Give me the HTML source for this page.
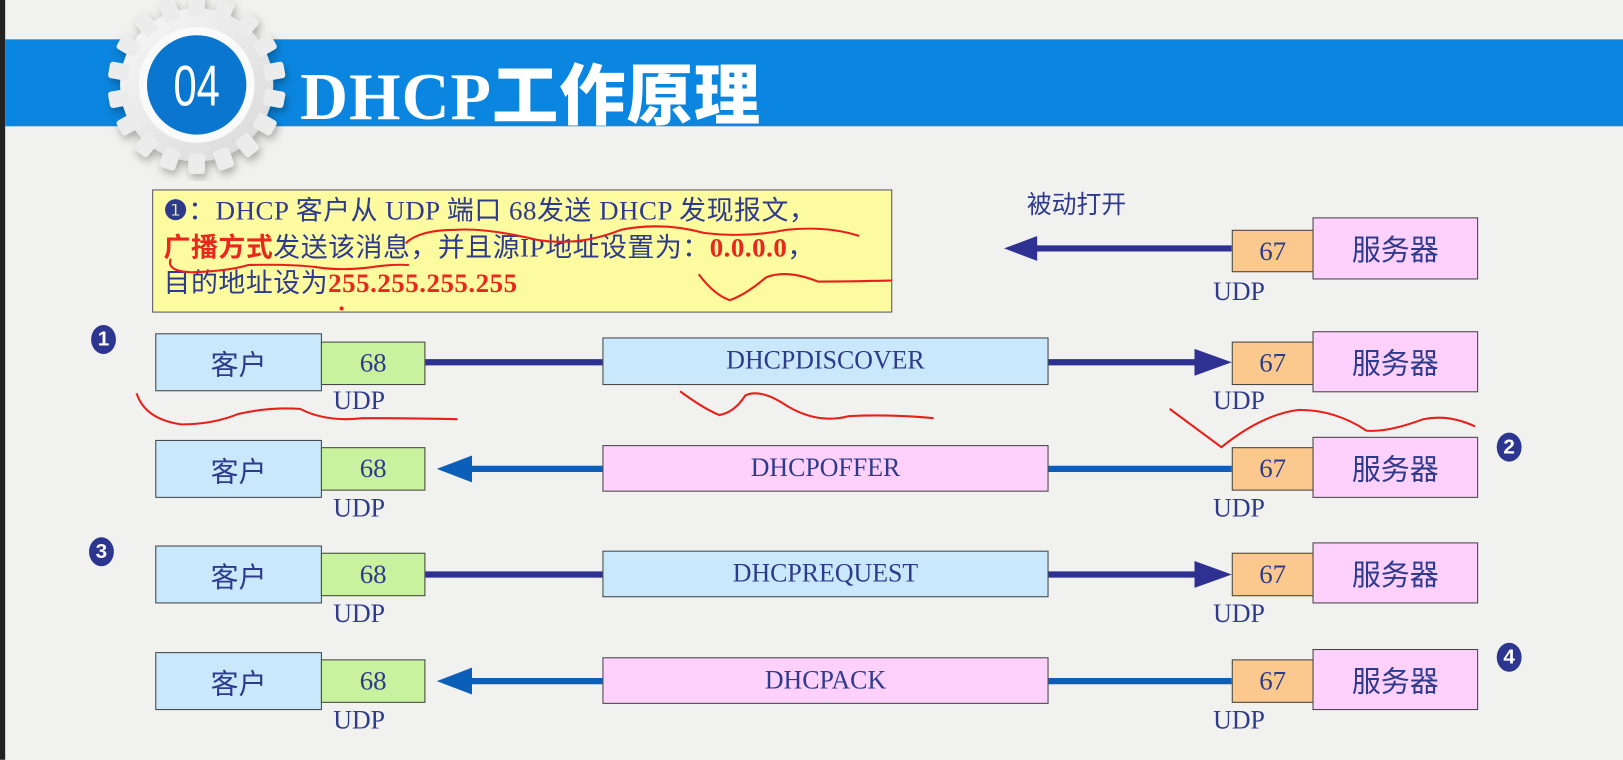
<!DOCTYPE html>
<html><head><meta charset="utf-8"><style>
html,body{margin:0;padding:0;width:1623px;height:760px;overflow:hidden;background:#f1f1ef;}
#w{position:absolute;left:0;top:0;width:1568px;height:734px;transform:scale(1.0351);transform-origin:0 0;font-family:"Liberation Serif","Noto Serif CJK SC",serif;color:#2e3a8c;}
.b{position:absolute;box-sizing:border-box;border:1.5px solid #444;display:flex;align-items:center;justify-content:center;}
.cl{background:#c9e8fb;font-family:"Liberation Sans","Noto Sans CJK SC",sans-serif;font-size:27px;}
.p68{background:#c8f29e;font-size:26px;}
.p67{background:#fbc98d;font-size:26px;}
.sv{background:#fdd1fc;font-family:"Liberation Sans","Noto Sans CJK SC",sans-serif;font-size:28px;}
.msg{font-size:25px;}
.u{position:absolute;font-size:25px;}
.n{position:absolute;width:24px;height:28px;border-radius:50%;background:#2c3590;color:#fff;font:bold 20px "Liberation Sans",sans-serif;display:flex;align-items:center;justify-content:center;}
</style></head><body><div id="w">
<div style="position:absolute;left:0;top:0;width:5px;height:734px;background:#222"></div>
<div style="position:absolute;left:5px;top:38px;width:1563px;height:84px;background:#0a86e0"></div>
<svg style="position:absolute;left:100px;top:0" width="190" height="175" viewBox="0 0 190 175">
<defs><filter id="s"><feDropShadow dx="2" dy="4" stdDeviation="4" flood-opacity="0.3"/></filter>
<linearGradient id="g" x1="0" y1="0" x2="1" y2="1"><stop offset="0" stop-color="#f8f8f8"/><stop offset="1" stop-color="#d8d8d8"/></linearGradient></defs>
<g filter="url(#s)" fill="url(#g)">
<circle cx="90" cy="82" r="74"/>
<g transform="translate(90 82)" fill="#ececec">
<rect x="-8" y="-86" width="16" height="20" rx="3"/><rect x="-8" y="-86" width="16" height="20" rx="3" transform="rotate(20)"/><rect x="-8" y="-86" width="16" height="20" rx="3" transform="rotate(40)"/><rect x="-8" y="-86" width="16" height="20" rx="3" transform="rotate(60)"/><rect x="-8" y="-86" width="16" height="20" rx="3" transform="rotate(80)"/><rect x="-8" y="-86" width="16" height="20" rx="3" transform="rotate(100)"/><rect x="-8" y="-86" width="16" height="20" rx="3" transform="rotate(120)"/><rect x="-8" y="-86" width="16" height="20" rx="3" transform="rotate(140)"/><rect x="-8" y="-86" width="16" height="20" rx="3" transform="rotate(160)"/><rect x="-8" y="-86" width="16" height="20" rx="3" transform="rotate(180)"/><rect x="-8" y="-86" width="16" height="20" rx="3" transform="rotate(200)"/><rect x="-8" y="-86" width="16" height="20" rx="3" transform="rotate(220)"/><rect x="-8" y="-86" width="16" height="20" rx="3" transform="rotate(240)"/><rect x="-8" y="-86" width="16" height="20" rx="3" transform="rotate(260)"/><rect x="-8" y="-86" width="16" height="20" rx="3" transform="rotate(280)"/><rect x="-8" y="-86" width="16" height="20" rx="3" transform="rotate(300)"/><rect x="-8" y="-86" width="16" height="20" rx="3" transform="rotate(320)"/><rect x="-8" y="-86" width="16" height="20" rx="3" transform="rotate(340)"/>
</g></g>
<circle cx="90" cy="82" r="56" fill="#fafafa"/>
<circle cx="90" cy="82" r="48" fill="#0a76d0"/>
<text x="90" y="102" text-anchor="middle" fill="#fff" font-family="Liberation Sans Narrow,Liberation Sans,sans-serif" font-size="56" transform="translate(90 0) scale(0.72 1) translate(-90 0)">04</text>
</svg>
<div style="position:absolute;left:290px;top:42px;color:#fff;font:bold 64px 'Liberation Serif','Noto Sans CJK SC',serif;white-space:nowrap;letter-spacing:1px">DHCP<span style="font-family:'Noto Sans CJK SC',sans-serif;font-weight:900">工作原理</span></div>

<div style="position:absolute;left:147px;top:183px;width:715px;height:119px;box-sizing:border-box;border:1.5px solid #556;background:#fcfba0;font-family:'Liberation Serif','Noto Sans CJK SC',serif;font-size:26px;letter-spacing:0.5px;line-height:34px;padding:2px 0 0 10px;white-space:nowrap;overflow:hidden">
<span style="font-family:'Liberation Sans';font-weight:bold">❶</span>：DHCP 客户从 UDP 端口 68发送 DHCP 发现报文，<br>
<b style="color:#e8281c;font-family:'Noto Sans CJK SC',sans-serif">广播方式</b>发送该消息，并且源IP地址设置为：<b style="color:#e8281c">0.0.0.0</b>，<br>
目的地址设为<b style="color:#e8281c">255.255.255.255</b></div>

<div style="position:absolute;left:992px;top:178px;font:24px 'Liberation Sans','Noto Sans CJK SC',sans-serif;color:#2e3a8c">被动打开</div>
<svg style="position:absolute;left:0;top:0" width="1568" height="734">
<line x1="995" y1="240" x2="1190" y2="240" stroke="#2e3191" stroke-width="6"/><polygon points="970,240 1002,228 1002,252" fill="#2e3191"/>
<line x1="410" y1="350" x2="1160" y2="350" stroke="#2e3191" stroke-width="6"/><polygon points="1190,350 1154,337 1154,363" fill="#2e3191"/>
<line x1="450" y1="453" x2="1190" y2="453" stroke="#0b5fb8" stroke-width="6"/><polygon points="422,453 456,440 456,466" fill="#0b5fb8"/>
<line x1="410" y1="555" x2="1160" y2="555" stroke="#2e3191" stroke-width="6"/><polygon points="1190,555 1154,542 1154,568" fill="#2e3191"/>
<line x1="450" y1="658" x2="1190" y2="658" stroke="#0b5fb8" stroke-width="6"/><polygon points="422,658 456,645 456,671" fill="#0b5fb8"/>
</svg>

<div class="b p67" style="left:1190px;top:222px;width:79px;height:41px">67</div>
<div class="b sv" style="left:1268px;top:210px;width:160px;height:60px">服务器</div>
<div class="u" style="left:1172px;top:269px">UDP</div>

<div class="b cl" style="left:150px;top:322px;width:161px;height:56px">客户</div>
<div class="b p68" style="left:310px;top:330px;width:101px;height:42px">68</div>
<div class="u" style="left:322px;top:374px">UDP</div>
<div class="b msg" style="left:582px;top:326px;width:431px;height:46px;background:#c9e8fb">DHCPDISCOVER</div>
<div class="b p67" style="left:1190px;top:330px;width:79px;height:42px">67</div>
<div class="b sv" style="left:1268px;top:320px;width:160px;height:59px">服务器</div>
<div class="u" style="left:1172px;top:374px">UDP</div>

<div class="b cl" style="left:150px;top:425px;width:161px;height:56px">客户</div>
<div class="b p68" style="left:310px;top:432px;width:101px;height:42px">68</div>
<div class="u" style="left:322px;top:478px">UDP</div>
<div class="b msg" style="left:582px;top:430px;width:431px;height:45px;background:#fdd1fc">DHCPOFFER</div>
<div class="b p67" style="left:1190px;top:432px;width:79px;height:42px">67</div>
<div class="b sv" style="left:1268px;top:422px;width:160px;height:59px">服务器</div>
<div class="u" style="left:1172px;top:478px">UDP</div>

<div class="b cl" style="left:150px;top:527px;width:161px;height:56px">客户</div>
<div class="b p68" style="left:310px;top:534px;width:101px;height:42px">68</div>
<div class="u" style="left:322px;top:580px">UDP</div>
<div class="b msg" style="left:582px;top:532px;width:431px;height:45px;background:#c9e8fb">DHCPREQUEST</div>
<div class="b p67" style="left:1190px;top:534px;width:79px;height:42px">67</div>
<div class="b sv" style="left:1268px;top:524px;width:160px;height:59px">服务器</div>
<div class="u" style="left:1172px;top:580px">UDP</div>

<div class="b cl" style="left:150px;top:630px;width:161px;height:56px">客户</div>
<div class="b p68" style="left:310px;top:637px;width:101px;height:42px">68</div>
<div class="u" style="left:322px;top:683px">UDP</div>
<div class="b msg" style="left:582px;top:635px;width:431px;height:45px;background:#fdd1fc">DHCPACK</div>
<div class="b p67" style="left:1190px;top:637px;width:79px;height:42px">67</div>
<div class="b sv" style="left:1268px;top:627px;width:160px;height:59px">服务器</div>
<div class="u" style="left:1172px;top:683px">UDP</div>

<div class="n" style="left:88px;top:314px">1</div>
<div class="n" style="left:1446px;top:418px">2</div>
<div class="n" style="left:86px;top:519px">3</div>
<div class="n" style="left:1446px;top:621px">4</div>

<svg style="position:absolute;left:0;top:0" width="1568" height="734" fill="none" stroke="#e8201a" stroke-width="2">
<path d="M392 235 Q405 222 440 222 Q470 220 520 232 Q560 238 600 222 Q640 214 680 225 Q720 230 760 222 Q800 218 830 228"/>
<path d="M165 250 Q160 262 185 263 Q220 262 240 256 Q280 255 305 258 Q330 262 360 258 Q380 255 395 256"/>
<path d="M675 265 Q690 285 705 290 Q720 285 740 268 Q760 260 790 272 Q820 272 862 271"/>
<path d="M132 380 Q140 405 175 410 Q205 410 230 400 Q260 393 290 395 Q315 408 350 404 Q400 404 442 405"/>
<path d="M657 378 Q680 395 695 401 Q710 398 720 382 Q735 375 760 392 Q790 410 820 402 Q860 400 902 404"/>
<path d="M1130 395 L1180 432 Q1220 400 1255 396 Q1290 396 1320 416 Q1340 418 1375 405 Q1400 400 1425 412"/>
</svg>
<div style="position:absolute;left:328px;top:296px;width:4px;height:4px;border-radius:50%;background:#e8201a"></div>
</div></body></html>
